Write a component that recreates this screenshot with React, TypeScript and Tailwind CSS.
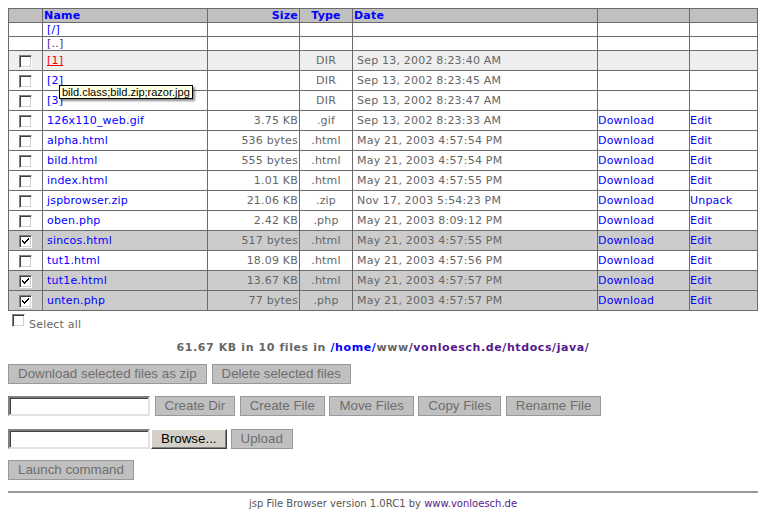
import React from 'react'

type Row = {
  name: string
  size?: string
  type: string
  date: string
  dir?: boolean
  action?: string
  checked?: boolean
  hover?: boolean
}

const rows: Row[] = [
  { name: '[1]', type: 'DIR', date: 'Sep 13, 2002 8:23:40 AM', dir: true, hover: true },
  { name: '[2]', type: 'DIR', date: 'Sep 13, 2002 8:23:45 AM', dir: true },
  { name: '[3]', type: 'DIR', date: 'Sep 13, 2002 8:23:47 AM', dir: true },
  { name: '126x110_web.gif', size: '3.75 KB', type: '.gif', date: 'Sep 13, 2002 8:23:33 AM', action: 'Edit' },
  { name: 'alpha.html', size: '536 bytes', type: '.html', date: 'May 21, 2003 4:57:54 PM', action: 'Edit' },
  { name: 'bild.html', size: '555 bytes', type: '.html', date: 'May 21, 2003 4:57:54 PM', action: 'Edit' },
  { name: 'index.html', size: '1.01 KB', type: '.html', date: 'May 21, 2003 4:57:55 PM', action: 'Edit' },
  { name: 'jspbrowser.zip', size: '21.06 KB', type: '.zip', date: 'Nov 17, 2003 5:54:23 PM', action: 'Unpack' },
  { name: 'oben.php', size: '2.42 KB', type: '.php', date: 'May 21, 2003 8:09:12 PM', action: 'Edit' },
  { name: 'sincos.html', size: '517 bytes', type: '.html', date: 'May 21, 2003 4:57:55 PM', action: 'Edit', checked: true },
  { name: 'tut1.html', size: '18.09 KB', type: '.html', date: 'May 21, 2003 4:57:56 PM', action: 'Edit' },
  { name: 'tut1e.html', size: '13.67 KB', type: '.html', date: 'May 21, 2003 4:57:57 PM', action: 'Edit', checked: true },
  { name: 'unten.php', size: '77 bytes', type: '.php', date: 'May 21, 2003 4:57:57 PM', action: 'Edit', checked: true },
]

const verdana = { fontFamily: '"DejaVu Sans", Verdana, sans-serif' }
const arial = { fontFamily: '"Liberation Sans", Arial, sans-serif' }

function Box({ checked }: { checked?: boolean }) {
  return (
    <span className="relative inline-block h-[13px] w-[13px] border border-t-[#808080] border-l-[#808080] border-b-white border-r-white bg-white align-top shadow-[inset_1px_1px_0_#404040,inset_-1px_-1px_0_#d4d0c8]">
      {checked && (
        <svg viewBox="0 0 7 7" className="absolute left-[2px] top-[2px] h-[7px] w-[7px]">
          <path d="M0 2h1v1h1v1h1V3h1V2h1V1h1V0h1v2H6v1H5v1H4v1H3v1H2V5H1V4H0z" fill="#000" />
        </svg>
      )}
    </span>
  )
}

function Btn({ children, className = '' }: { children: React.ReactNode; className?: string }) {
  return (
    <span
      className={`inline-block h-[20px] border border-[#999] bg-[#c0c0c0] px-[9px] text-[13.33px] leading-[18px] text-[#6e6e6e] whitespace-nowrap ${className}`}
      style={arial}
    >
      {children}
    </span>
  )
}

function Field() {
  return (
    <span className="inline-block h-[20px] w-[142px] border-2 border-t-[#808080] border-l-[#808080] border-b-[#e4e2dc] border-r-[#e4e2dc] bg-white shadow-[inset_1px_1px_0_#404040]" />
  )
}

const cell = 'border border-[#6b6b6b] p-0 text-[11px] leading-[13px] tracking-[0.2px]'

export default function App() {
  return (
    <div className="relative min-h-[513px] bg-white px-[8px] pt-[8px] text-[#666]" style={verdana}>
      <table className="w-full table-fixed border-collapse">
        <colgroup>
          <col className="w-[34px]" />
          <col className="w-[165px]" />
          <col className="w-[92px]" />
          <col className="w-[53px]" />
          <col className="w-[245px]" />
          <col className="w-[92px]" />
          <col />
        </colgroup>
        <thead>
          <tr className="bg-[#c0c0c0] font-bold text-[#0000ff]">
            <th className={cell}></th>
            <th className={`${cell} pl-[1px] text-left`}>Name</th>
            <th className={`${cell} pr-[1px] text-right`}>Size</th>
            <th className={`${cell} text-center`}>Type</th>
            <th className={`${cell} pl-[1px] text-left`}>Date</th>
            <th className={cell}></th>
            <th className={cell}></th>
          </tr>
        </thead>
        <tbody>
          {['[/]', '[..]'].map((n, i) => (
            <tr key={n}>
              <td className={cell}></td>
              <td className={`${cell} pl-[4px] ${i === 0 ? 'text-[#0000ff]' : 'text-[#551a8b]'}`}>{n}</td>
              <td className={cell}></td>
              <td className={cell}></td>
              <td className={cell}></td>
              <td className={cell}></td>
              <td className={cell}></td>
            </tr>
          ))}
          {rows.map((r) => (
            <tr
              key={r.name}
              className={`h-[20px] ${r.checked ? 'bg-[#cccccc]' : r.hover ? 'bg-[#eeeeee]' : 'bg-white'}`}
            >
              <td className={`${cell} h-[20px] text-center`}>
                <span className="inline-block pt-[1px]">
                  <Box checked={r.checked} />
                </span>
              </td>
              <td className={`${cell} pl-[4px]`}>
                <span className={r.hover ? 'text-[#ff0000] underline' : 'text-[#0000ff]'}>{r.name}</span>
              </td>
              <td className={`${cell} whitespace-nowrap pr-[1px] text-right`}>{r.size}</td>
              <td className={`${cell} text-center`}>{r.type}</td>
              <td className={`${cell} whitespace-nowrap pl-[4px]`}>{r.date}</td>
              <td className={`${cell} text-[#0000ff]`}>{r.dir ? '' : 'Download'}</td>
              <td className={`${cell} text-[#0000ff]`}>{r.dir ? '' : r.action}</td>
            </tr>
          ))}
        </tbody>
      </table>

      {/* tooltip over row [2] */}
      <div
        className="absolute left-[59px] top-[85px] border border-black bg-[#ffffe1] px-[2px] text-[11px] leading-[12px] text-black shadow-[2px_2px_2px_rgba(0,0,0,0.45)] whitespace-nowrap"
        style={arial}
      >
        bild.class;bild.zip;razor.jpg
      </div>

      <div className="mt-[3px] flex items-start pl-[4px]">
        <Box />
        <span className="ml-[4px] mt-[4px] text-[11px] leading-[13px] tracking-[0.2px]">Select all</span>
      </div>

      <div className="mt-[10px] text-center text-[11px] font-bold leading-[14px] tracking-[0.6px] text-[#666]">
        61.67 KB in 10 files in <span className="text-[#0000ff]">/home/</span>www
        <span className="text-[#551a8b]">/vonloesch.de/htdocs/java/</span>
      </div>

      <div className="mt-[9px] flex gap-[5px]">
        <Btn>Download selected files as zip</Btn>
        <Btn>Delete selected files</Btn>
      </div>

      <div className="mt-[12px] flex gap-[4.5px]">
        <Field />
        <Btn>Create Dir</Btn>
        <Btn>Create File</Btn>
        <Btn>Move Files</Btn>
        <Btn>Copy Files</Btn>
        <Btn>Rename File</Btn>
      </div>

      <div className="mt-[13px] flex items-start">
        <Field />
        <span
          className="ml-[1px] inline-block h-[20px] border border-t-white border-l-white border-b-[#404040] border-r-[#404040] bg-[#d4d0c8] px-[9px] text-[13.33px] leading-[18px] text-black shadow-[inset_-1px_-1px_0_#808080]"
          style={arial}
        >
          Browse...
        </span>
        <Btn className="ml-[4px]">Upload</Btn>
      </div>

      <div className="mt-[11px] flex">
        <Btn>Launch command</Btn>
      </div>

      <div className="mt-[11px] border-t-2 border-[#999]" />

      <div className="mt-[5px] text-center text-[10px] leading-[12px] text-[#555]">
        jsp File Browser version 1.0RC1 by <span className="text-[#551a8b]">www.vonloesch.de</span>
      </div>
    </div>
  )
}
